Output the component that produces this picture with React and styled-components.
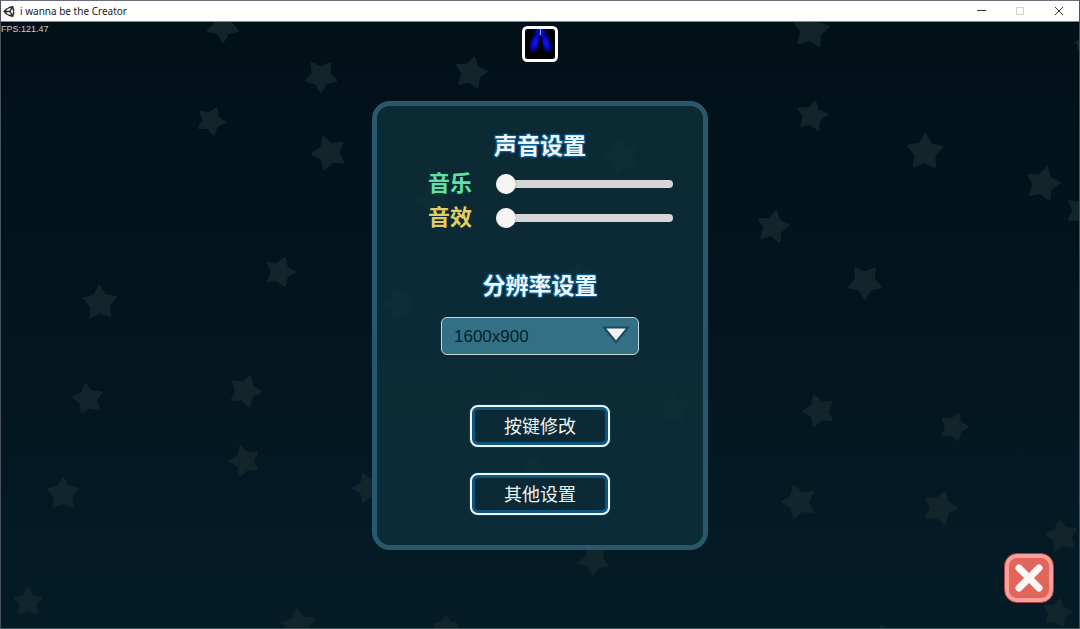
import React, { useState } from 'react';
import styled, { createGlobalStyle } from 'styled-components';
import { FaUnity } from 'react-icons/fa';

const stars = [
    [223, 26, 17, 180], [321, 76, 17, 180], [471, 73, 17, 12], [211, 121, 15, 24],
    [329, 153, 18, -20], [280, 272, 16, 18], [100, 303, 18, -2], [88, 399, 16, -10],
    [245, 391, 17, 20], [245, 461, 16, -18], [63, 494, 17, 0], [368, 488, 16, -18],
    [28, 602, 15, 0], [299, 626, 18, -8], [446, 628, 13, 0], [594, 560, 16, 186],
    [811, 30, 19, 8], [812, 116, 16, 12], [925, 152, 19, 2], [1043, 184, 18, 14],
    [1082, 211, 17, 20], [773, 227, 17, 12], [865, 282, 18, 180], [819, 411, 17, -18],
    [954, 427, 15, 18], [799, 502, 18, -18], [940, 508, 18, 18], [1062, 536, 17, -10],
    [1057, 613, 15, 12], [882, 640, 16, 0], [1082, 44, 7, 0], [622, 157, 18, -18],
    [399, 304, 17, -18], [434, 200, 17, -18], [673, 409, 17, 0], [530, 400, 15, 0],
    [534, 468, 14, 18], [578, 276, 14, 0],
];

const resolutions = ['1280x720', '1600x900', '1920x1080'];

// five pointed star around 0,0
function starPoints(r) {
    const points = [];
    for (let i = 0; i < 10; i++) {
        const radius = i % 2 ? r * 0.52 : r - 1;
        const a = (Math.PI / 5) * i;
        points.push(`${(radius * Math.sin(a)).toFixed(1)},${(-radius * Math.cos(a)).toFixed(1)}`);
    }
    return points.join(' ');
}

function Stars() {
    return (
        <Sky viewBox="1 22 1078 606" preserveAspectRatio="xMidYMid slice" aria-hidden="true">
            {stars.map(([x, y, r, turn]) => (
                <polygon key={`${x}-${y}`} points={starPoints(r)} transform={`translate(${x} ${y}) rotate(${turn})`} />
            ))}
        </Sky>
    )
}

function Slider({ id, label, color }) {
    const [value, setValue] = useState(0);
    return (
        <SliderRow>
            <SliderLabel htmlFor={id} color={color}>{label}</SliderLabel>
            <Range id={id} type="range" min="0" max="100" value={value} onChange={(e) => setValue(e.target.value)} />
        </SliderRow>
    )
}

export default function App() {
    const [resolution, setResolution] = useState('1600x900');
    return (
        <>
            <GlobalStyle />
            <Window>
                <TitleBar>
                    <FaUnity size={13} stroke="#222" strokeWidth="16" />
                    <Caption>i wanna be the Creator</Caption>
                    <WindowButton aria-label="最小化">
                        <svg width="10" height="10"><path d="M1 4.5h9" stroke="#333" /></svg>
                    </WindowButton>
                    <WindowButton aria-label="最大化" disabled>
                        <svg width="10" height="10"><path d="M1.5 1.5h7v7h-7z" stroke="#d0d0d0" fill="none" /></svg>
                    </WindowButton>
                    <WindowButton aria-label="关闭窗口">
                        <svg width="10" height="10"><path d="M1 1l8 8M9 1l-8 8" stroke="#333" /></svg>
                    </WindowButton>
                </TitleBar>
                <Scene>
                    <Stars />
                    <Fps>FPS:121.47</Fps>
                    <Center>
                        <Avatar viewBox="0 0 36 36" aria-hidden="true">
                            <defs>
                                <radialGradient id="glow">
                                    <stop offset="0" stopColor="#1018ff" />
                                    <stop offset="0.5" stopColor="#0808e0" stopOpacity="0.85" />
                                    <stop offset="1" stopColor="#000040" stopOpacity="0" />
                                </radialGradient>
                            </defs>
                            <rect x="1.5" y="1.5" width="33" height="33" rx="4" fill="#010204" />
                            <ellipse cx="18" cy="8" rx="8" ry="10" fill="url(#glow)" />
                            <ellipse cx="13" cy="17" rx="6" ry="12" transform="rotate(18 13 17)" fill="url(#glow)" />
                            <ellipse cx="24" cy="17" rx="6" ry="12" transform="rotate(-18 24 17)" fill="url(#glow)" />
                            <path d="M18.5 9l-1.5 3-1.500 14 2 3h2l2-4-1.500-13z" fill="#010208" />
                            <path d="M18.500 3v6" stroke="#8fa0ff" />
                            <rect x="1.500" y="1.500" width="33" height="33" rx="4" fill="none" stroke="#fff" strokeWidth="3" />
                        </Avatar>
                        <Panel>
                            <Title>声音设置</Title>
                            <Sliders>
                                <Slider id="music" label="音乐" color="#5fe3a3" />
                                <Slider id="sound" label="音效" color="#e3ce62" />
                            </Sliders>
                            <Title as="label" htmlFor="resolution">分辨率设置</Title>
                            <SelectBox>
                                <Select id="resolution" value={resolution} onChange={(e) => setResolution(e.target.value)}>
                                    {resolutions.map((r) => <option key={r}>{r}</option>)}
                                </Select>
                                <Arrow viewBox="0 0 30 20" aria-hidden="true">
                                    <path d="M3 2.500h24L15 17z" fill="#f4f4fa" stroke="#17485c" strokeWidth="2" />
                                </Arrow>
                            </SelectBox>
                            <Buttons>
                                <Button>按键修改</Button>
                                <Button>其他设置</Button>
                            </Buttons>
                        </Panel>
                    </Center>
                    <Close aria-label="关闭">
                        <svg width="28" height="28" viewBox="0 0 28 28">
                            <path d="M4 4l20 20M24 4L4 24" stroke="#fdf6f6" strokeWidth="7" strokeLinecap="round" />
                        </svg>
                    </Close>
                </Scene>
            </Window>
        </>
    )
}

const GlobalStyle = createGlobalStyle`
    * {
        box-sizing: border-box;
    }

    body {
        margin: 0;
        background: #03131c;
        font-family: "Liberation Sans", "Noto Sans CJK SC", sans-serif;
    }

    button, select, input {
        margin: 0;
        font-family: inherit;
    }
`

const Window = styled.div`
    display: flex;
    flex-direction: column;
    min-height: 100vh;
    border: 1px solid #4a525c;
    border-top-color: #6f6c7c;
`

const TitleBar = styled.header`
    display: flex;
    align-items: center;
    height: 21px;
    padding: 0 1px 0 2px;
    background: #fff;
    border-bottom: 1px solid #85898f;
    color: #222;
`

const Caption = styled.span`
    flex: 1;
    margin-left: 4px;
    color: #222;
    font-family: "Noto Sans", sans-serif;
    font-size: 10px;
`

const WindowButton = styled.button`
    display: flex;
    align-items: center;
    justify-content: center;
    width: 39px;
    height: 20px;
    padding: 0;
    border: 0;
    background: none;
`

const Scene = styled.main`
    position: relative;
    flex: 1;
    display: grid;
    grid-template-columns: 1fr auto 1fr;
    overflow: hidden;
    background: linear-gradient(#021118, #03141e 45%, #041c26);
`

const Sky = styled.svg`
    position: absolute;
    width: 100%;
    height: 100%;
    fill: #11252b;
    stroke: #11252b;
    stroke-width: 2;
    stroke-linejoin: round;
`

const Fps = styled.span`
    position: relative;
    color: #c9ced0;
    font-size: 9px;
    line-height: 14px;
`

const Center = styled.div`
    position: relative;
    display: flex;
    flex-direction: column;
    align-items: center;
    padding: 4px 0 24px;
`

const Avatar = styled.svg`
    width: 36px;
    height: 36px;
    margin-bottom: 39px;
`

const Panel = styled.section`
    display: flex;
    flex-direction: column;
    align-items: center;
    width: 336px;
    padding: 23px 0 30px;
    background: rgba(13, 48, 59, 0.82);
    background-clip: padding-box;
    border: 5px solid #28586b;
    border-radius: 18px;
`

const Title = styled.h2`
    margin: 0;
    color: #f2f8ff;
    font-size: 23px;
    font-weight: bold;
    line-height: 34px;
    text-shadow: 1px 1px 1px #0b5f92, -1px -1px 1px #0b5f92, 1px -1px 1px #0b5f92, -1px 1px 1px #0b5f92, 0 0 3px #0b5f92;
`

const Sliders = styled.div`
    align-self: stretch;
    margin: 4px 0 34px;
    padding: 0 30px 0 51px;
`

const SliderRow = styled.div`
    display: flex;
    align-items: center;
    height: 34px;
`

const SliderLabel = styled.label`
    width: 68px;
    color: ${(props) => props.color};
    font-size: 22px;
    font-weight: bold;
    line-height: 34px;
`

const Range = styled.input`
    flex: 1;
    min-width: 0;
    height: 20px;
    appearance: none;
    background: none;

    &::-webkit-slider-runnable-track {
        height: 8px;
        border-radius: 4px;
        background: #d6d6d6;
    }

    &::-webkit-slider-thumb {
        appearance: none;
        width: 20px;
        height: 20px;
        margin-top: -6px;
        border-radius: 50%;
        background: #f5f5f5;
        box-shadow: 0 0 1px #444;
    }
`

const SelectBox = styled.div`
    position: relative;
    width: 198px;
    margin: 14px 0 50px;
`

const Select = styled.select`
    display: block;
    width: 100%;
    height: 38px;
    padding: 0 40px 0 12px;
    appearance: none;
    background: #337086;
    border: 1px solid #c4d6da;
    border-radius: 6px;
    color: #04202b;
    font-size: 17px;
`

const Arrow = styled.svg`
    position: absolute;
    top: 8px;
    right: 8px;
    width: 30px;
    height: 20px;
    pointer-events: none;
`

const Buttons = styled.div`
    display: flex;
    flex-direction: column;
    gap: 26px;
`

const Button = styled.button`
    width: 140px;
    height: 42px;
    padding: 0 0 2px;
    background: #0a2935;
    border: 2px solid #eef8fc;
    border-radius: 8px;
    box-shadow: inset 0 0 0 3px #0c5680, 0 0 2px #1c6a8c;
    color: #eef6f8;
    font-size: 18px;
    font-weight: 400;

    &:hover {
        background: #0f3a4a;
    }
`

const Close = styled.button`
    position: relative;
    display: flex;
    align-items: center;
    justify-content: center;
    justify-self: end;
    align-self: end;
    width: 50px;
    height: 50px;
    margin: 0 25px 25px 0;
    padding: 0;
    background: #e0655a;
    border: 1px solid #a8423f;
    border-radius: 13px;
    box-shadow: inset 0 0 0 4px #fa9f99;
`
